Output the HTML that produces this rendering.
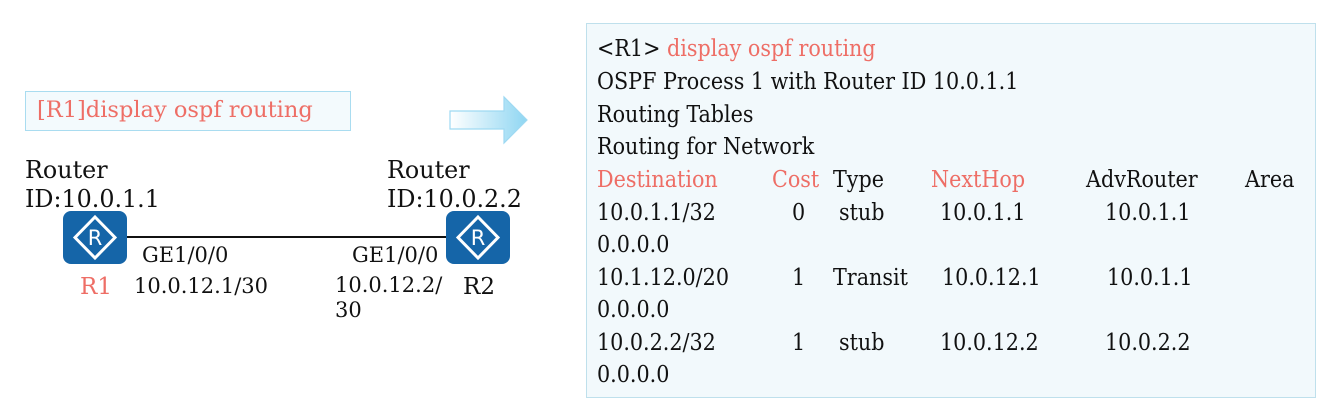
<!DOCTYPE html>
<html><head><meta charset="utf-8"><style>
body{margin:0;width:1330px;height:409px;background:#fff;position:relative;overflow:hidden;font-family:"DejaVu Serif","Liberation Serif",serif;color:#111}
.a{position:absolute;white-space:nowrap;line-height:1}
.r{color:#ee6e66}
.p{position:absolute;left:586px;top:23px;width:730px;height:375px;background:#f2f9fc;border:1px solid #bfe0ec;box-sizing:border-box}
.t{position:absolute;white-space:nowrap;font-size:23px;line-height:1;font-stretch:condensed;font-family:"DejaVu Serif Condensed","DejaVu Serif",serif;margin-top:2px}
.rt{position:absolute;width:64px;height:53px;background:#1565a8;border-radius:8px}
</style></head><body>
<div class="a" style="left:25px;top:91px;width:326px;height:40px;box-sizing:border-box;border:1px solid #a9dcf0;background:#f3fafd"></div>
<div class="a r" style="left:37px;top:99px;font-size:22.5px">[R1]display ospf routing</div>
<svg class="a" style="left:448px;top:95px" width="82" height="50">
<defs><linearGradient id="g" x1="0" x2="1"><stop offset="0" stop-color="#fff"/><stop offset="1" stop-color="#8fd6f2"/></linearGradient></defs>
<path d="M2 16H56V2L79 25L56 48V34H2Z" fill="url(#g)" stroke="#9ed9f2" stroke-width="1.2"/></svg>
<div class="a" style="left:25px;top:156px;font-size:23.8px;line-height:29px">Router<br>ID:10.0.1.1</div>
<div class="a" style="left:387px;top:156px;font-size:23.8px;line-height:29px">Router<br>ID:10.0.2.2</div>
<div class="a" style="left:127px;top:236px;width:320px;height:2px;background:#111"></div>
<div class="rt" style="left:63px;top:211px"></div>
<div class="rt" style="left:446px;top:211px"></div>
<svg class="a" style="left:63px;top:211px" width="64" height="53"><path d="M32 6L52 26.5L32 47L12 26.5Z" fill="none" stroke="#fff" stroke-width="3"/><text x="32" y="34" font-family="DejaVu Sans,sans-serif" font-size="21" fill="#fff" text-anchor="middle">R</text></svg>
<svg class="a" style="left:446px;top:211px" width="64" height="53"><path d="M32 6L52 26.5L32 47L12 26.5Z" fill="none" stroke="#fff" stroke-width="3"/><text x="32" y="34" font-family="DejaVu Sans,sans-serif" font-size="21" fill="#fff" text-anchor="middle">R</text></svg>
<div class="a" style="left:142px;top:245px;font-size:21px">GE1/0/0</div>
<div class="a" style="left:352px;top:245px;font-size:21px">GE1/0/0</div>
<div class="a r" style="left:80px;top:276px;font-size:23px">R1</div>
<div class="a" style="left:134px;top:276px;font-size:21px">10.0.12.1/30</div>
<div class="a" style="left:335px;top:273px;font-size:21px;line-height:25px">10.0.12.2/<br>30</div>
<div class="a" style="left:463px;top:276px;font-size:23px">R2</div>
<div class="p"></div>
<div class="t" style="left:597px;top:36px">&lt;R1&gt; <span class="r">display ospf routing</span></div>
<div class="t" style="left:597px;top:69px">OSPF Process 1 with Router ID 10.0.1.1</div>
<div class="t" style="left:597px;top:102px">Routing Tables</div>
<div class="t" style="left:597px;top:134px">Routing for Network</div>
<div class="t r" style="left:597px;top:167px">Destination</div>
<div class="t r" style="left:772px;top:167px">Cost</div>
<div class="t" style="left:833px;top:167px">Type</div>
<div class="t r" style="left:931px;top:167px">NextHop</div>
<div class="t" style="left:1086px;top:167px">AdvRouter</div>
<div class="t" style="left:1245px;top:167px">Area</div>
<div class="t" style="left:597px;top:200px">10.0.1.1/32</div>
<div class="t" style="left:792px;top:200px">0</div>
<div class="t" style="left:839px;top:200px">stub</div>
<div class="t" style="left:940px;top:200px">10.0.1.1</div>
<div class="t" style="left:1105px;top:200px">10.0.1.1</div>
<div class="t" style="left:597px;top:232px">0.0.0.0</div>
<div class="t" style="left:597px;top:265px">10.1.12.0/20</div>
<div class="t" style="left:792px;top:265px">1</div>
<div class="t" style="left:833px;top:265px">Transit</div>
<div class="t" style="left:942px;top:265px">10.0.12.1</div>
<div class="t" style="left:1107px;top:265px">10.0.1.1</div>
<div class="t" style="left:597px;top:297px">0.0.0.0</div>
<div class="t" style="left:597px;top:330px">10.0.2.2/32</div>
<div class="t" style="left:792px;top:330px">1</div>
<div class="t" style="left:839px;top:330px">stub</div>
<div class="t" style="left:940px;top:330px">10.0.12.2</div>
<div class="t" style="left:1105px;top:330px">10.0.2.2</div>
<div class="t" style="left:597px;top:362px">0.0.0.0</div>
</body></html>
